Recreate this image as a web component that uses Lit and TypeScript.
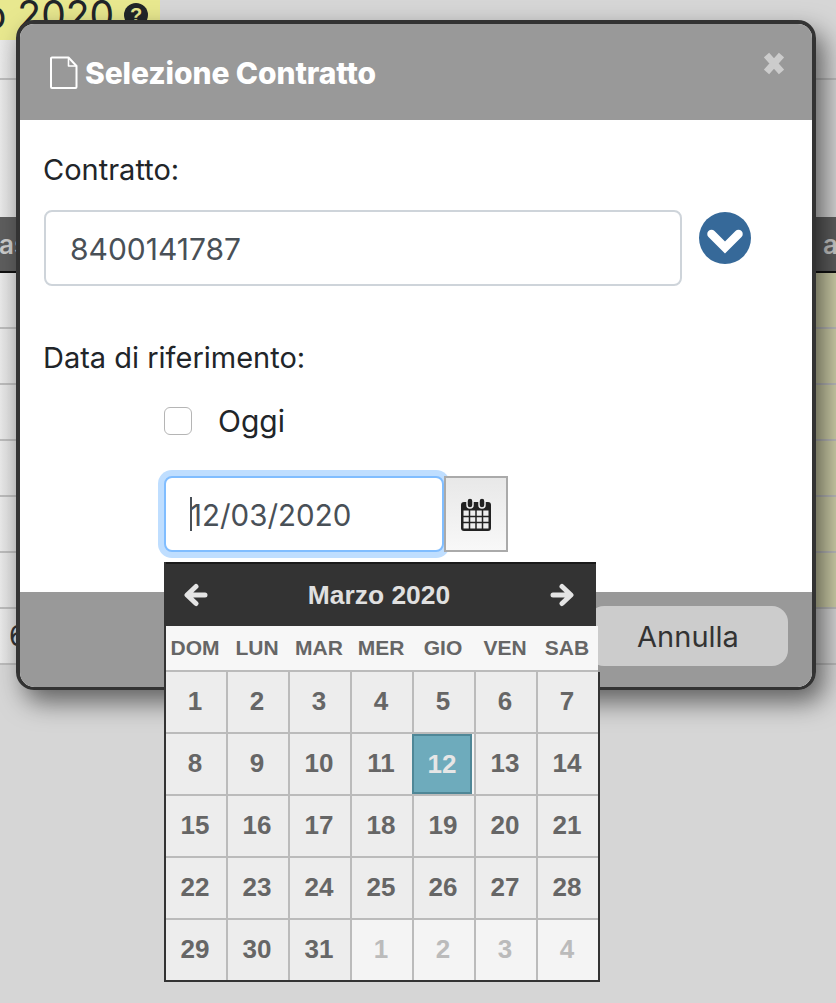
import { LitElement, html, css, svg } from 'lit';
import { customElement } from 'lit/decorators.js';

const WEEKDAYS = ['DOM', 'LUN', 'MAR', 'MER', 'GIO', 'VEN', 'SAB'];
const NEXT_MONTH = [1, 2, 3, 4];

const docIcon = svg`<svg class="doc-icon" viewBox="0 0 28 33" fill="none" stroke="#fff" stroke-width="2" stroke-linejoin="round">
  <path d="M2 1.500h16.500l8 8.500v21a1 1 0 0 1-1 1H2a1 1 0 0 1-1-1V2.500a1 1 0 0 1 1-1z" />
  <path d="M18.500 2v8h7.500" stroke-width="1.600" />
</svg>`;

const closeIcon = svg`<svg class="close-icon" viewBox="0 0 20 23" fill="none" stroke="#ccc" stroke-width="7">
  <path d="M2.500 3 17.500 20M17.500 3 2.500 20" />
</svg>`;

const chevronCircle = svg`<svg class="chevron" viewBox="0 0 52 52">
  <circle cx="26" cy="26" r="26" fill="#366999" />
  <path d="M12.500 22 26 35.500 39.500 22" fill="none" stroke="#fff" stroke-width="8.500" stroke-linecap="round" stroke-linejoin="miter" />
</svg>`;

const calendarIcon = svg`<svg class="cal-icon" viewBox="0 0 30 33">
  <rect x="0" y="4" width="30" height="29" rx="3" fill="#222" />
  <rect x="6" y="0" width="6" height="10" rx="3" fill="#222" stroke="#eee" stroke-width="1.500" />
  <rect x="18" y="0" width="6" height="10" rx="3" fill="#222" stroke="#eee" stroke-width="1.500" />
  <path d="M2.500 12.500h25v18h-25z" fill="#eee" />
  <path d="M8.500 12v19M15 12v19M21.500 12v19M2 18.500h26M2 24.500h26" stroke="#222" stroke-width="1.500" />
</svg>`;

const arrow = (right: boolean) => svg`<svg class="arrow" viewBox="0 0 24 24" fill="none" stroke="#e4e4e4" stroke-width="5" stroke-linecap="round" stroke-linejoin="round">
  ${right
    ? svg`<path d="M3 12h17M12 3.500l9 8.500-9 8.500" />`
    : svg`<path d="M21 12H4M12 3.500 3 12l9 8.500" />`}
</svg>`;

@customElement('date-popup')
export class DatePopup extends LitElement {
  static styles = css`
    :host {
      display: block;
      position: absolute;
      left: 164px;
      top: 562px;
      width: 436px;
      font-family: 'Liberation Sans', Arial, sans-serif;
      font-weight: 700;
      border-left: 2px solid #333;
      box-sizing: border-box;
    }
    .head {
      height: 64px;
      width: 430px;
      box-sizing: border-box;
      background: #333;
      border-top: 2px solid #1a1a1a;
      display: flex;
      align-items: center;
      justify-content: space-between;
      padding: 0 22px 0 18px;
      color: #e0e0e0;
      font-size: 26.400px;
    }
    .arrow {
      width: 24px;
      height: 24px;
      display: block;
    }
    .weekdays {
      display: grid;
      grid-template-columns: repeat(7, 62px);
      width: 432px;
      height: 46px;
      box-sizing: border-box;
      background: #f7f7f7;
      border-bottom: 2px solid #bbb;
      color: #666;
      font-size: 21px;
      line-height: 44px;
      text-align: center;
    }
    .weekdays span {
      padding-right: 4px;
    }
    .grid {
      display: grid;
      grid-template-columns: repeat(7, 62px);
      grid-auto-rows: 62px;
      width: 434px;
      height: 310px;
      box-sizing: border-box;
      border-right: 2px solid #333;
      border-bottom: 2px solid #333;
      overflow: hidden;
      background: #ededed;
    }
    .cell {
      position: relative;
      box-sizing: border-box;
      padding: 0 2px 2px 0;
      border-right: 2px solid #bbb;
      border-bottom: 2px solid #bbb;
      background: #ededed;
      color: #666;
      font-size: 26px;
      display: flex;
      align-items: center;
      justify-content: center;
    }
    .other {
      background: #f4f4f4;
      color: #bbb;
    }
    .selected {
      position: absolute;
      left: -2px;
      top: 0;
      width: 60px;
      height: 60px;
      box-sizing: border-box;
      background: #6eabbc;
      border: 2px solid #4f8797;
      color: #e6e6e6;
      display: flex;
      align-items: center;
      justify-content: center;
      box-shadow: 2px 0 0 #f6f6f6;
    }
  `;

  render() {
    const days = Array.from({ length: 31 }, (_, i) => i + 1);
    return html`
      <div class="head">
        ${arrow(false)}
        <span>Marzo 2020</span>
        ${arrow(true)}
      </div>
      <div class="weekdays">${WEEKDAYS.map((d) => html`<span>${d}</span>`)}</div>
      <div class="grid">
        ${days.map((d) => html`
          <div class="cell">
            ${d === 12 ? html`<div class="selected">12</div>` : d}
          </div>
        `)}
        ${NEXT_MONTH.map((d) => html`<div class="cell other">${d}</div>`)}
      </div>
    `;
  }
}

@customElement('app-root')
export class AppRoot extends LitElement {
  static styles = css`
    :host {
      display: block;
      position: relative;
      width: 836px;
      height: 1003px;
      overflow: hidden;
      background: #d6d6d6;
      font-family: Inter, 'Noto Sans', sans-serif;
      color: #212529;
    }

    /* page behind the dialog */
    .title-strip {
      width: 160px;
      height: 40px;
      background: #e8e88f;
      overflow: hidden;
      display: flex;
      align-items: flex-start;
      gap: 10px;
      font-size: 39px;
      line-height: 30px;
      white-space: nowrap;
      color: #212529;
    }
    .title-strip span {
      margin-left: -17px;
    }
    .help {
      flex: none;
      width: 24px;
      height: 24px;
      margin: 3px 0 0 0;
      border-radius: 50%;
      background: #212529;
      color: #e8e88f;
      font: 700 20px/24px 'Liberation Sans', sans-serif;
      text-align: center;
    }
    .backdrop {
      background: linear-gradient(to right, #e9e9e9, #d6d6d6 22px);
    }
    .line-top {
      height: 40px;
      box-sizing: border-box;
      border-bottom: 2px solid #bbb;
    }
    .gap {
      height: 137px;
    }
    .thead {
      height: 56px;
      box-sizing: border-box;
      background: #5e5e5e;
      border-bottom: 2px solid #111;
      display: flex;
      justify-content: space-between;
      align-items: center;
      color: #ccc;
      font-size: 26px;
      font-weight: 600;
      overflow: hidden;
    }
    .thead span:first-child {
      margin-left: -1px;
    }
    .thead span:last-child {
      margin-right: -2px;
    }
    .row {
      height: 56px;
      box-sizing: border-box;
      border-bottom: 2px solid #bbb;
      display: flex;
      align-items: center;
      justify-content: space-between;
      font-size: 28px;
      color: #333;
    }
    .row .left {
      margin-left: 9px;
    }
    .row .tip {
      margin-left: 15px;
    }
    .row .yellow {
      align-self: stretch;
      width: 40px;
      background: #cfcfa9;
    }

    /* dialog */
    .modal {
      position: absolute;
      left: 16px;
      top: 20px;
      width: 800px;
      height: 670px;
      box-sizing: border-box;
      border: 4px solid #333;
      border-bottom-width: 3px;
      border-radius: 18px;
      overflow: hidden;
      display: flex;
      flex-direction: column;
      background: #fff;
    }
    .shadow {
      position: absolute;
      left: 16px;
      top: 20px;
      width: 800px;
      height: 670px;
      border-radius: 18px;
      box-shadow: 8px 12px 26px rgba(0, 0, 0, 0.55);
    }
    .modal-head {
      flex: none;
      height: 96px;
      box-sizing: border-box;
      background: #999;
      display: flex;
      align-items: flex-start;
      padding: 32px 28px 0 30px;
      gap: 7px;
      color: #fff;
      font-size: 30px;
      font-weight: 800;
      letter-spacing: -0.1px;
      line-height: 34px;
    }
    .doc-icon {
      width: 28px;
      height: 33px;
      flex: none;
    }
    .close-icon {
      width: 20px;
      height: 23px;
      margin: -4px 0 0 auto;
    }
    .modal-body {
      flex: 1;
      padding: 32px 24px 0;
      font-size: 29px;
      line-height: 36px;
      color: #212529;
    }
    .label {
      margin-left: -1px;
    }
    .input {
      box-sizing: border-box;
      height: 76px;
      border: 2px solid #ced4da;
      border-radius: 8px;
      display: flex;
      align-items: center;
      padding: 2px 0 0 24px;
      color: #495057;
      font-size: 30px;
      background: #fff;
    }
    .contract {
      display: flex;
      align-items: flex-start;
      gap: 17px;
      margin-top: 22px;
    }
    .contract .input {
      width: 638px;
    }
    .chevron {
      width: 52px;
      height: 52px;
      flex: none;
      margin-top: 2px;
    }
    .date-label {
      margin-top: 54px;
    }
    .today {
      display: flex;
      align-items: center;
      gap: 26px;
      margin: 27px 0 0 120px;
      font-size: 30px;
    }
    .checkbox {
      width: 28px;
      height: 28px;
      box-sizing: border-box;
      border: 1px solid #b5b5b5;
      border-radius: 6px;
      background: #fff;
    }
    .date-row {
      display: flex;
      margin: 37px 0 0 120px;
    }
    .date-input {
      position: relative;
      width: 280px;
      border-color: #80bdff;
      box-shadow: 0 0 0 6px #bfdeff;
      padding: 2px 0 0 24px;
      font-size: 29.500px;
    }
    .caret {
      position: absolute;
      left: 24px;
      top: 19px;
      width: 2px;
      height: 34px;
      background: #495057;
    }
    .cal-btn {
      position: relative;
      width: 64px;
      height: 76px;
      box-sizing: border-box;
      border: 2px solid #aaa;
      background: linear-gradient(#e8e8e8, #f8f8f8);
      display: flex;
      align-items: center;
      justify-content: center;
    }
    .cal-icon {
      width: 30px;
      height: 33px;
    }
    .modal-foot {
      flex: none;
      height: 95px;
      box-sizing: border-box;
      background: #999;
      display: flex;
      justify-content: flex-end;
      padding: 14px 24px 0 0;
    }
    .btn {
      width: 200px;
      height: 60px;
      border-radius: 16px;
      background: #ccc;
      color: #333;
      font-size: 29px;
      box-sizing: border-box;
      display: flex;
      align-items: center;
      justify-content: center;
    }
  `;

  render() {
    return html`
      <div class="title-strip">
        <span>o 2020</span>
        <div class="help">?</div>
      </div>
      <div class="backdrop">
        <div class="line-top"></div>
        <div class="gap"></div>
        <div class="thead"><span>as</span><span>a</span></div>
        ${[0, 1, 2, 3, 4, 5].map((i) => html`
          <div class="row">
            ${i === 2 || i === 4 ? html`<span class="left tip">9</span>` : html`<span></span>`}
            <div class="yellow"></div>
          </div>
        `)}
        <div class="row"><span class="left">6</span></div>
      </div>

      <div class="shadow"></div>
      <div class="modal">
        <div class="modal-head">
          ${docIcon}
          <span>Selezione Contratto</span>
          ${closeIcon}
        </div>
        <div class="modal-body">
          <div class="label">Contratto:</div>
          <div class="contract">
            <div class="input">8400141787</div>
            ${chevronCircle}
          </div>
          <div class="label date-label">Data di riferimento:</div>
          <div class="today">
            <div class="checkbox"></div>
            <span>Oggi</span>
          </div>
          <div class="date-row">
            <div class="input date-input">
              <span class="caret"></span>
              12/03/2020
            </div>
            <div class="cal-btn">${calendarIcon}</div>
          </div>
        </div>
        <div class="modal-foot">
          <div class="btn">Annulla</div>
        </div>
      </div>
      <date-popup></date-popup>
    `;
  }
}
